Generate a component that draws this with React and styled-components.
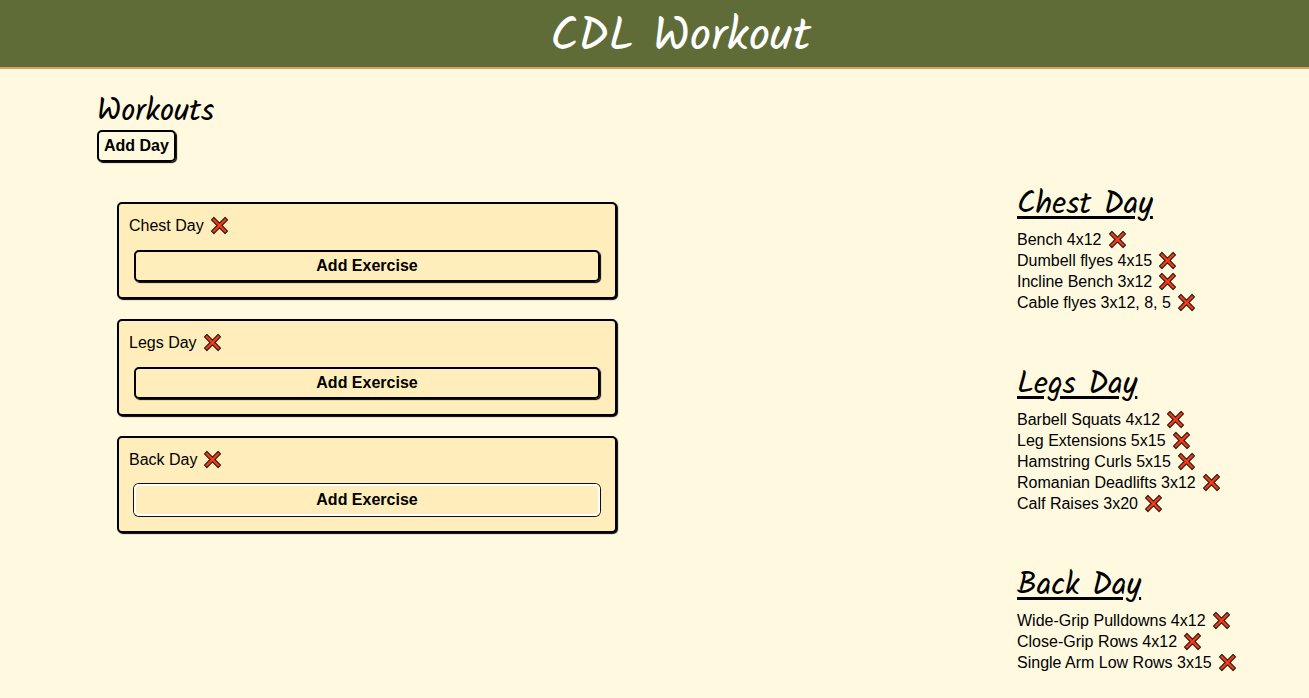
import React from 'react';
import styled, { createGlobalStyle } from 'styled-components';

const GlobalStyle = createGlobalStyle`
  *, *::before, *::after { box-sizing: border-box; }
  body {
    margin: 0;
    background: #fff9e0;
    color: #000;
    font-family: Arial, 'Liberation Sans', sans-serif;
    font-size: 16px;
    line-height: 21px;
  }
`;

const script = `Kalam, Lato, cursive`;

const Header = styled.header`
  display: flex;
  justify-content: center;
  padding: 8px 0 0 52px;
  background: #606c38;
  border-bottom: 2px solid #dda15e;
`;

const Title = styled.h1`
  margin: 0;
  color: #fff;
  font: 400 47px/59px ${script};
`;

const Main = styled.main`
  display: grid;
  grid-template-columns: minmax(0, 1fr) 292px;
  padding: 25px 0 24px 97px;
`;

const Heading = styled.h2`
  margin: 0;
  font: 400 31px/36px ${script};
`;

const DayHeading = styled(Heading)`
  margin-bottom: 3px;
  line-height: 43px;
  text-decoration: underline;
  text-decoration-thickness: 3px;
  text-underline-offset: 3px;
`;

const Button = styled.button`
  height: 32px;
  padding: 0 5px;
  border: 2px solid ${({ $focused }) => ($focused ? '#fff' : '#000')};
  border-radius: 5px;
  background: transparent;
  box-shadow: ${({ $focused }) => ($focused ? '0 0 0 1px #101010' : '1px 1px 1px #000')};
  color: #000;
  font: bold 16px/20px Arial, 'Liberation Sans', sans-serif;
  cursor: pointer;
`;

const AddExercise = styled(Button)`
  margin: 14px 5px 5px;
`;

const Cards = styled.div`
  display: grid;
  gap: 20px;
  width: 500px;
  max-width: 100%;
  margin: 40px 20px 0;
`;

const Card = styled.article`
  display: flex;
  flex-direction: column;
  padding: 11px 10px 10px;
  border: 2px solid #000;
  border-radius: 5px;
  background: #ffeebb;
  box-shadow: 1px 1px 1px #000;
`;

const Row = styled.div`
  display: flex;
  align-items: center;
  gap: 6px;
`;

const RemoveButton = styled.button`
  display: flex;
  padding: 0;
  border: 0;
  background: none;
  cursor: pointer;
`;

const Summary = styled.aside`
  display: grid;
  align-content: start;
  gap: 50px;
  padding-top: 89px;
`;

const List = styled.ul`
  margin: 0;
  padding: 0;
  list-style: none;
`;

function Remove({ name }) {
  return (
    <RemoveButton type="button" aria-label={`Remove ${name}`}>
      <svg width="19" height="19" viewBox="0 0 19 19" aria-hidden="true">
        <path
          d="M3.9 1.5 L9.5 7.1 L15.1 1.5 L17.5 3.9 L11.9 9.5 L17.5 15.1 L15.1 17.5 L9.5 11.9 L3.9 17.5 L1.5 15.1 L7.1 9.5 L1.5 3.9 Z"
          fill="#f83a14"
          stroke="#31201a"
          strokeWidth="1.2"
          strokeLinejoin="round"
        />
      </svg>
    </RemoveButton>
  );
}

const days = [
  { name: 'Chest Day', exercises: ['Bench 4x12', 'Dumbell flyes 4x15', 'Incline Bench 3x12', 'Cable flyes 3x12, 8, 5'] },
  { name: 'Legs Day', exercises: ['Barbell Squats 4x12', 'Leg Extensions 5x15', 'Hamstring Curls 5x15', 'Romanian Deadlifts 3x12', 'Calf Raises 3x20'] },
  { name: 'Back Day', exercises: ['Wide-Grip Pulldowns 4x12', 'Close-Grip Rows 4x12', 'Single Arm Low Rows 3x15'] },
];

export default function App() {
  return (
    <>
      <GlobalStyle />
      <Header>
        <Title>CDL Workout</Title>
      </Header>
      <Main>
        <section>
          <Heading>Workouts</Heading>
          <Button type="button">Add Day</Button>
          <Cards>
            {days.map(({ name }) => (
              <Card key={name}>
                <Row>
                  <span>{name}</span>
                  <Remove name={name} />
                </Row>
                <AddExercise type="button" $focused={name === 'Back Day'}>Add Exercise</AddExercise>
              </Card>
            ))}
          </Cards>
        </section>
        <Summary>
          {days.map(({ name, exercises }) => (
            <section key={name}>
              <DayHeading>{name}</DayHeading>
              <List>
                {exercises.map((exercise) => (
                  <Row as="li" key={exercise}>
                    <span>{exercise}</span>
                    <Remove name={exercise} />
                  </Row>
                ))}
              </List>
            </section>
          ))}
        </Summary>
      </Main>
    </>
  );
}
